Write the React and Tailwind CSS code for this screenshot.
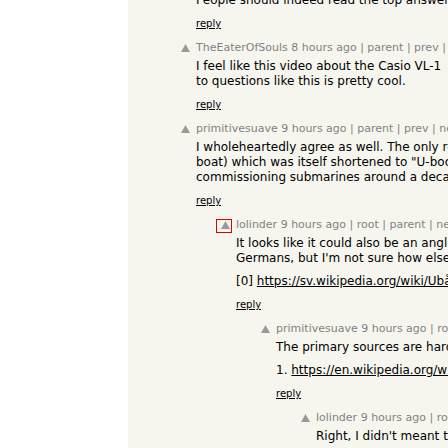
import React from "react";

const Arrow = ({ boxed }) => (
  <div className="relative w-[15px] shrink-0 h-[15px]">
    {boxed && (
      <span className="absolute left-[-5px] top-[2px] w-[16px] h-[14px] border border-[#e00000]" />
    )}
    <svg width="9" height="8" viewBox="0 0 9 8" className="absolute left-0 top-[4px]">
      <polygon points="4.5,0 9,8 0,8" fill="#9a9a9a" />
    </svg>
  </div>
);

const Reply = () => (
  <div className="mt-[8px] h-[15px] leading-[15px] text-[10px] text-black underline">reply</div>
);

const Comment = ({ level, user, time, nav, paras, boxed }) => (
  <div className="flex mt-[9px]" style={{ paddingLeft: 53 + level * 40 }}>
    <Arrow boxed={boxed} />
    <div className="whitespace-nowrap">
      <div className="h-[15px] leading-[15px] text-[11px] text-[#828282]">
        {user} {time} {nav}
      </div>
      {paras.map((p, i) => (
        <div
          key={i}
          className={`${i === 0 ? "mt-[4px]" : "mt-[8px]"} text-[12px] leading-[15px] text-black`}
        >
          {p}
        </div>
      ))}
      <Reply />
    </div>
  </div>
);

export default function App() {
  return (
    <div
      className="w-[448px] h-[448px] overflow-hidden flex bg-white"
      style={{ fontFamily: '"DejaVu Sans", Verdana, sans-serif' }}
    >
      <div className="w-[128px] shrink-0 bg-white" />
      <div className="flex-1 bg-[#f6f6ef] overflow-hidden">
        <div className="mt-[-7px] w-[900px]">
          <div className="flex" style={{ paddingLeft: 53 }}>
            <div className="w-[15px] shrink-0" />
            <div className="whitespace-nowrap">
              <div className="text-[12px] leading-[15px] text-black">
                People should indeed read the top answers before commenting here.
              </div>
              <Reply />
            </div>
          </div>

          <Comment
            level={0}
            user="TheEaterOfSouls"
            time="8 hours ago"
            nav="| parent | prev | next [–]"
            paras={[
              <>
                I feel like this video about the Casio VL-1
                <br />
                to questions like this is pretty cool.
              </>,
            ]}
          />

          <Comment
            level={0}
            user="primitivesuave"
            time="9 hours ago"
            nav="| parent | prev | next [–]"
            paras={[
              <>
                I wholeheartedly agree as well. The only reason it became known as U-
                <br />
                boat) which was itself shortened to "U-boot" in German, meaning
                <br />
                commissioning submarines around a decade later.
              </>,
            ]}
          />

          <Comment
            level={1}
            boxed
            user="lolinder"
            time="9 hours ago"
            nav="| root | parent | next [–]"
            paras={[
              <>
                It looks like it could also be an anglicization of what the
                <br />
                Germans, but I'm not sure how else it would be used.
              </>,
              <>
                [0] <span className="underline">https://sv.wikipedia.org/wiki/Ubåt</span>
              </>,
            ]}
          />

          <Comment
            level={2}
            user="primitivesuave"
            time="9 hours ago"
            nav="| root | parent | next [–]"
            paras={[
              <>The primary sources are hard to find online.</>,
              <>
                1. <span className="underline">https://en.wikipedia.org/wiki/U-boat</span>
              </>,
            ]}
          />

          <Comment
            level={3}
            user="lolinder"
            time="9 hours ago"
            nav="| root | parent | next [–]"
            paras={[<>Right, I didn't meant to imply otherwise.</>]}
          />
        </div>
      </div>
    </div>
  );
}
